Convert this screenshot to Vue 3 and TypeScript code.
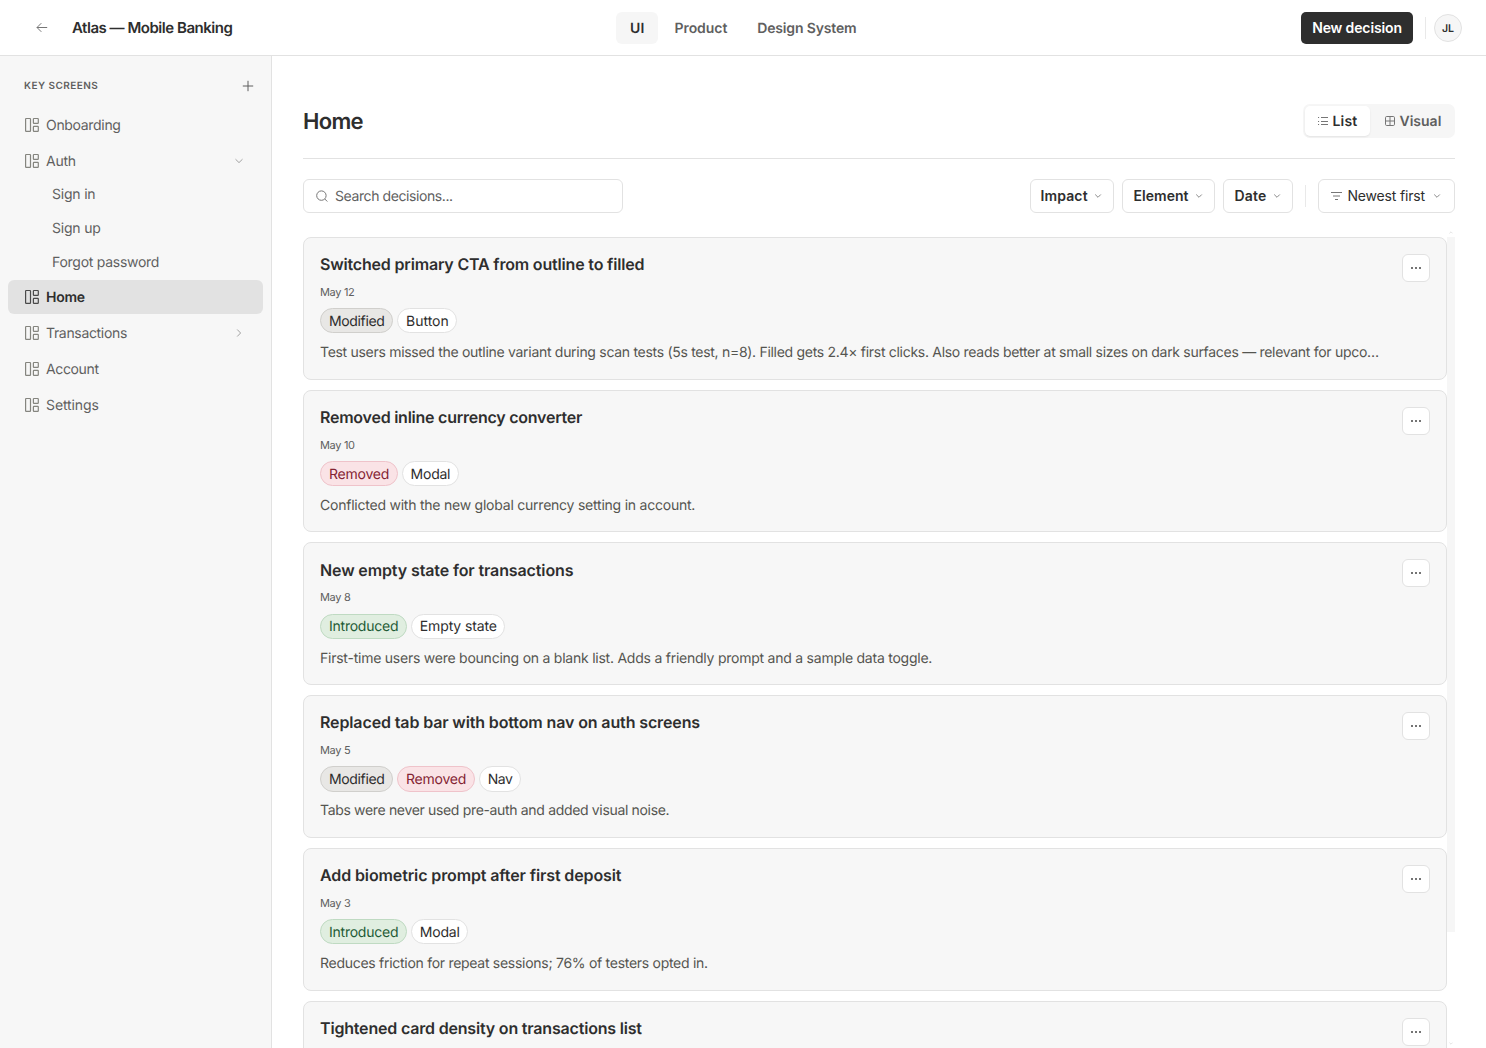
<script setup lang="ts">
type Tone = 'modified' | 'removed' | 'introduced' | 'element'

interface Tag {
  label: string
  tone: Tone
  tracking: number
}

interface Decision {
  title: string
  titleTracking: number
  date?: string
  tags?: Tag[]
  note?: string
  noteTracking?: number
}

interface Screen {
  label: string
  tracking: number
  active?: boolean
  chevron?: 'down' | 'right'
  children?: { label: string; tracking: number }[]
}

const modified: Tag = { label: 'Modified', tone: 'modified', tracking: -0.36 }
const removed: Tag = { label: 'Removed', tone: 'removed', tracking: -0.24 }
const introduced: Tag = { label: 'Introduced', tone: 'introduced', tracking: -0.24 }
const element = (label: string, tracking: number): Tag => ({ label, tone: 'element', tracking })

const screens: Screen[] = [
  { label: 'Onboarding', tracking: -0.32 },
  {
    label: 'Auth',
    tracking: -0.25,
    chevron: 'down',
    children: [
      { label: 'Sign in', tracking: -0.2 },
      { label: 'Sign up', tracking: -0.2 },
      { label: 'Forgot password', tracking: -0.27 },
    ],
  },
  { label: 'Home', tracking: -0.29, active: true },
  { label: 'Transactions', tracking: -0.33, chevron: 'right' },
  { label: 'Account', tracking: -0.36 },
  { label: 'Settings', tracking: -0.1 },
]

const filters = [
  { label: 'Impact', tracking: 0.12 },
  { label: 'Element', tracking: 0.03 },
  { label: 'Date', tracking: 0.15 },
]

const decisions: Decision[] = [
  {
    title: 'Switched primary CTA from outline to filled',
    titleTracking: -0.177,
    date: 'May 12',
    tags: [modified, element('Button', -0.02)],
    note: 'Test users missed the outline variant during scan tests (5s test, n=8). Filled gets 2.4× first clicks. Also reads better at small sizes on dark surfaces — relevant for upco…',
    noteTracking: -0.296,
  },
  {
    title: 'Removed inline currency converter',
    titleTracking: -0.245,
    date: 'May 10',
    tags: [removed, element('Modal', -0.25)],
    note: 'Conflicted with the new global currency setting in account.',
    noteTracking: -0.231,
  },
  {
    title: 'New empty state for transactions',
    titleTracking: -0.115,
    date: 'May 8',
    tags: [introduced, element('Empty state', -0.14)],
    note: 'First-time users were bouncing on a blank list. Adds a friendly prompt and a sample data toggle.',
    noteTracking: -0.238,
  },
  {
    title: 'Replaced tab bar with bottom nav on auth screens',
    titleTracking: -0.125,
    date: 'May 5',
    tags: [modified, removed, element('Nav', -0.45)],
    note: 'Tabs were never used pre-auth and added visual noise.',
    noteTracking: -0.335,
  },
  {
    title: 'Add biometric prompt after first deposit',
    titleTracking: -0.115,
    date: 'May 3',
    tags: [introduced, element('Modal', -0.2)],
    note: 'Reduces friction for repeat sessions; 76% of testers opted in.',
    noteTracking: -0.282,
  },
  {
    title: 'Tightened card density on transactions list',
    titleTracking: -0.185,
  },
]

const track = (value = 0) => ({ letterSpacing: `${value}px` })
</script>

<template>
  <div class="app">
    <header class="topbar">
      <div class="brand">
        <svg class="back" width="16" height="16" viewBox="0 0 16 16">
          <path d="M13.2 7.5H3M7.3 3.2 3 7.5l4.3 4.3" />
        </svg>
        <span class="project">Atlas — Mobile Banking</span>
      </div>
      <nav class="tabs">
        <a class="tab current">UI</a>
        <a class="tab product">Product</a>
        <a class="tab">Design System</a>
      </nav>
      <div class="actions">
        <button class="primary">New decision</button>
        <span class="rule"></span>
        <span class="avatar">JL</span>
      </div>
    </header>

    <div class="body">
      <aside class="sidebar">
        <div class="side-head">
          <span>KEY SCREENS</span>
          <svg width="12" height="12" viewBox="0 0 12 12"><path d="M6 .8v10.4M.8 6h10.4" /></svg>
        </div>
        <template v-for="s in screens" :key="s.label">
          <div class="item" :class="{ active: s.active }">
            <svg class="layout" width="16" height="16" viewBox="0 0 16 16">
              <rect x="1.6" y="1.5" width="4.9" height="12.8" rx=".6" />
              <rect x="9.4" y="1.5" width="4.9" height="4.8" rx=".6" />
              <rect x="9.4" y="9.3" width="4.9" height="5" rx=".6" />
            </svg>
            <span class="label" :style="track(s.tracking)">{{ s.label }}</span>
            <svg v-if="s.chevron" class="chev" width="10" height="10" viewBox="0 0 10 10">
              <path :d="s.chevron === 'down' ? 'M1.5 3.2 5 6.6l3.5-3.4' : 'M3.2 1.5 6.6 5 3.2 8.5'" />
            </svg>
          </div>
          <div v-if="s.children" class="children">
            <div v-for="c in s.children" :key="c.label" class="child" :style="track(c.tracking)">{{ c.label }}</div>
          </div>
        </template>
      </aside>

      <main class="main">
        <div class="title-row">
          <h1>Home</h1>
          <div class="segmented">
            <span class="seg on">
              <svg width="10" height="10" viewBox="0 0 10 10">
                <path d="M3 1.5h7M3 5.5h7M3 8.5h7M0 1.5h1.1M0 5.5h1.1M0 8.5h1.1" />
              </svg>
              <span>List</span>
            </span>
            <span class="seg visual">
              <svg width="10" height="10" viewBox="0 0 10 10">
                <rect x=".5" y=".5" width="9" height="9" rx="1.2" />
                <path d="M5 .5v9M.5 5h9" />
              </svg>
              <span>Visual</span>
            </span>
          </div>
        </div>

        <div class="toolbar">
          <div class="search">
            <svg width="12" height="12" viewBox="0 0 12 12">
              <circle cx="5.4" cy="5.6" r="4.7" />
              <path d="m8.8 9 2.5 2.5" />
            </svg>
            <span>Search decisions...</span>
          </div>
          <div class="filters">
            <button v-for="f in filters" :key="f.label" class="filter">
              <span :style="track(f.tracking)">{{ f.label }}</span>
              <svg width="8" height="8" viewBox="0 0 8 8"><path d="M1.2 2.5 4 5.3l2.8-2.8" /></svg>
            </button>
            <span class="rule"></span>
            <button class="filter sort">
              <svg class="lines" width="11" height="10" viewBox="0 0 11 10">
                <path d="M0 1.5h11M2 5h7M4 8.5h3" />
              </svg>
              <span>Newest first</span>
              <svg width="8" height="8" viewBox="0 0 8 8"><path d="M1.2 2.5 4 5.3l2.8-2.8" /></svg>
            </button>
          </div>
        </div>

        <div class="list-wrap">
          <div class="list">
            <article v-for="d in decisions" :key="d.title" class="card">
              <div class="content">
                <h2 :style="track(d.titleTracking)">{{ d.title }}</h2>
                <time v-if="d.date">{{ d.date }}</time>
                <div v-if="d.tags" class="tags">
                  <span v-for="t in d.tags" :key="t.label" class="tag" :class="t.tone" :style="track(t.tracking)">{{ t.label }}</span>
                </div>
                <p v-if="d.note" :style="track(d.noteTracking)">{{ d.note }}</p>
              </div>
              <button class="more" aria-label="More">
                <svg width="12" height="2" viewBox="0 0 12 2">
                  <path d="M1 0h2v2H1zM5 0h2v2H5zM9 0h2v2H9z" />
                </svg>
              </button>
            </article>
          </div>
          <div class="scroll">
            <svg class="hint up" width="4" height="3" viewBox="0 0 4 3"><path d="M.4 2.4 2 .8l1.6 1.6" /></svg>
            <div class="thumb"></div>
            <svg class="hint down" width="4" height="3" viewBox="0 0 4 3"><path d="M.4.6 2 2.2 3.6.6" /></svg>
          </div>
        </div>
      </main>
    </div>
  </div>
</template>

<style>
body {
  background: #fff;
  overflow: hidden;
}
</style>

<style scoped>
.app {
  display: flex;
  flex-direction: column;
  height: 1048px;
  overflow: hidden;
  color: #2e2e2e;
  font-family: Inter, "Liberation Sans", sans-serif;
  font-size: 14px;
  text-rendering: geometricPrecision;
  -webkit-font-smoothing: antialiased;
}
.app *,
.app {
  box-sizing: border-box;
}
svg {
  display: block;
  flex: none;
  fill: none;
  stroke: currentColor;
  stroke-width: 1;
}
button {
  font: inherit;
  color: inherit;
  margin: 0;
}

.topbar {
  flex: none;
  display: grid;
  grid-template-columns: 1fr auto 1fr;
  align-items: center;
  height: 56px;
  padding: 0 24px 0 33.5px;
  border-bottom: 1px solid #e2e2e2;
}
.brand {
  display: flex;
  align-items: center;
}
.back {
  color: #767676;
}
.project {
  margin-left: 22.5px;
  font-size: 15px;
  font-weight: 600;
  letter-spacing: -0.47px;
}
.tabs {
  display: flex;
  gap: 2px;
  margin-left: -9px;
}
.tab {
  height: 32px;
  padding: 0 14px;
  border-radius: 6px;
  line-height: 33px;
  font-weight: 600;
  color: #5f5f5f;
  letter-spacing: -0.16px;
}
.tab.product {
  padding-left: 14.5px;
  letter-spacing: -0.06px;
}
.tab.current {
  width: 42px;
  padding: 0 14px;
  background: #f6f6f6;
  color: #2e2e2e;
  letter-spacing: 0.3px;
}
.actions {
  display: flex;
  align-items: center;
  justify-content: flex-end;
}
.primary {
  width: 112px;
  height: 32px;
  padding: 0;
  border: 0;
  border-radius: 5px;
  background: #2e2e2e;
  color: #fff;
  font-weight: 600;
  letter-spacing: -0.13px;
}
.rule {
  width: 1px;
  height: 22px;
  background: #e9e9e9;
}
.actions .rule {
  margin: 0 8px 0 12px;
}
.avatar {
  width: 28px;
  height: 28px;
  border: 1px solid #e2e2e2;
  border-radius: 50%;
  background: #f6f6f6;
  font-size: 10.5px;
  font-weight: 600;
  line-height: 27px;
  text-align: center;
}

.body {
  flex: 1;
  min-height: 0;
  display: flex;
}
.sidebar {
  flex: none;
  width: 272px;
  padding: 14px 8px 0;
  border-right: 1px solid #e2e2e2;
  background: #f7f7f7;
  color: #5f5f5f;
}
.side-head {
  display: flex;
  align-items: center;
  justify-content: space-between;
  height: 32px;
  margin-bottom: 6px;
  padding: 0 9px 0 16px;
  font-size: 10px;
  font-weight: 600;
  letter-spacing: 0.44px;
}
.side-head span {
  margin-top: -1px;
}
.item {
  display: flex;
  align-items: center;
  height: 34px;
  margin-bottom: 2px;
  padding: 0 19px 0 16px;
  border-radius: 6px;
}
.layout {
  color: #85857f;
  stroke-width: 1.2;
}
.label {
  flex: 1;
  margin-left: 6px;
}
.chev {
  color: #a2a2a2;
}
.item.active {
  background: #e2e2e2;
  color: #2e2e2e;
  font-weight: 600;
}
.active .layout {
  color: #4a4a4a;
}
.children {
  margin-top: -2px;
}
.child {
  height: 34px;
  padding-left: 44px;
  line-height: 33px;
}

.main {
  flex: 1;
  min-width: 0;
  display: flex;
  flex-direction: column;
  padding: 48px 31px 0;
}
.title-row {
  flex: none;
  display: flex;
  justify-content: space-between;
  align-items: flex-start;
  height: 55px;
  border-bottom: 1px solid #e2e2e2;
}
h1 {
  margin: 0;
  font-size: 22px;
  line-height: 37px;
  font-weight: 600;
  letter-spacing: -0.7px;
}
.segmented {
  display: flex;
  width: 152px;
  height: 34px;
  padding: 2px;
  border-radius: 7px;
  background: #f6f6f6;
}
.seg {
  display: flex;
  align-items: center;
  gap: 5px;
  width: 65px;
  height: 30px;
  padding-left: 13px;
  border-radius: 5px;
  color: #5f5f5f;
  font-weight: 600;
}
.seg svg {
  color: #767676;
}
.seg.on {
  gap: 4.5px;
  background: #fff;
  color: #2e2e2e;
  letter-spacing: 0.15px;
  box-shadow: 0 1px 2px rgba(0, 0, 0, 0.08);
}
.seg.visual {
  width: 83px;
  padding-left: 14.5px;
}

.toolbar {
  flex: none;
  display: flex;
  justify-content: space-between;
  margin: 20px 0 24px;
}
.search {
  display: flex;
  align-items: center;
  gap: 6px;
  width: 320px;
  height: 34px;
  padding: 0 12px;
  border: 1px solid #e2e2e2;
  border-radius: 6px;
  color: #5f5f5f;
  letter-spacing: -0.41px;
}
.search svg {
  margin-right: 1px;
  color: #767676;
}
.filters {
  display: flex;
  align-items: center;
}
.filter {
  display: flex;
  align-items: center;
  justify-content: space-between;
  height: 34px;
  margin-right: 8px;
  padding: 0 11px 0 9.5px;
  border: 1px solid #e2e2e2;
  border-radius: 6px;
  background: #fff;
  font-weight: 600;
}
.filter > span {
  margin-top: -1px;
}
.filter:nth-of-type(1) {
  width: 84px;
}
.filter:nth-of-type(2) {
  width: 93px;
  padding-left: 10.5px;
}
.filter:nth-of-type(3) {
  width: 70px;
  padding-left: 10.5px;
}
.filter svg {
  color: #8a8a8a;
}
.filters .rule {
  margin: 0 12px 0 4px;
}
.filter.sort {
  justify-content: flex-start;
  width: 137px;
  margin: 0;
  padding: 0 13px 0 12px;
  font-weight: 400;
  letter-spacing: -0.18px;
}
.sort .lines {
  margin-right: 5.5px;
  color: #767676;
}
.sort svg:last-child {
  margin-left: auto;
}

.list-wrap {
  flex: 1;
  min-height: 0;
  display: flex;
}
.list {
  flex: 1;
  min-width: 0;
  display: flex;
  flex-direction: column;
  gap: 10px;
  overflow: hidden;
}
.card {
  flex: none;
  display: flex;
  justify-content: space-between;
  align-items: flex-start;
  height: 142.72px;
  padding: 16px;
  border: 1px solid #e2e2e2;
  border-radius: 8px;
  background: #f7f7f7;
}
.content {
  margin-top: -0.8px;
}
h2 {
  margin: 0 0 8.8px;
  font-size: 16px;
  line-height: 22px;
  font-weight: 600;
}
time {
  display: block;
  margin-bottom: 8.1px;
  font-size: 11px;
  line-height: 16px;
  color: #5f5f5f;
  letter-spacing: -0.33px;
}
.tags {
  display: flex;
  gap: 4px;
  height: 25.4px;
}
.tag {
  padding: 3.9px 7.6px 0 8px;
  border: 1px solid #e2e2e2;
  border-radius: 13px;
  line-height: 17px;
}
.tag.element {
  background: #fff;
}
.tag.modified {
  background: #e8e7e5;
  border-color: #d0cfcc;
}
.tag.removed {
  background: #fae3e6;
  border-color: #efc3ca;
  color: #842433;
}
.tag.introduced {
  background: #e0eee0;
  border-color: #bfdac2;
  color: #1f5c37;
}
p {
  margin: 8.7px 0 0;
  line-height: 21px;
  white-space: nowrap;
  color: #555550;
}
.more {
  display: flex;
  align-items: center;
  justify-content: center;
  flex: none;
  width: 28px;
  height: 28px;
  padding: 0;
  border: 1px solid #e2e2e2;
  border-radius: 6px;
  background: #fff;
  color: #747474;
}
.more svg {
  fill: currentColor;
  stroke: none;
}
.scroll {
  flex: none;
  display: flex;
  flex-direction: column;
  align-items: center;
  width: 8px;
  margin-top: -6px;
}
.thumb {
  width: 8px;
  height: 695px;
  margin-top: 3px;
  background: #f6f6f6;
}
.hint {
  color: #e4e4e4;
}
.hint.down {
  margin: auto 0 3px;
}
</style>
